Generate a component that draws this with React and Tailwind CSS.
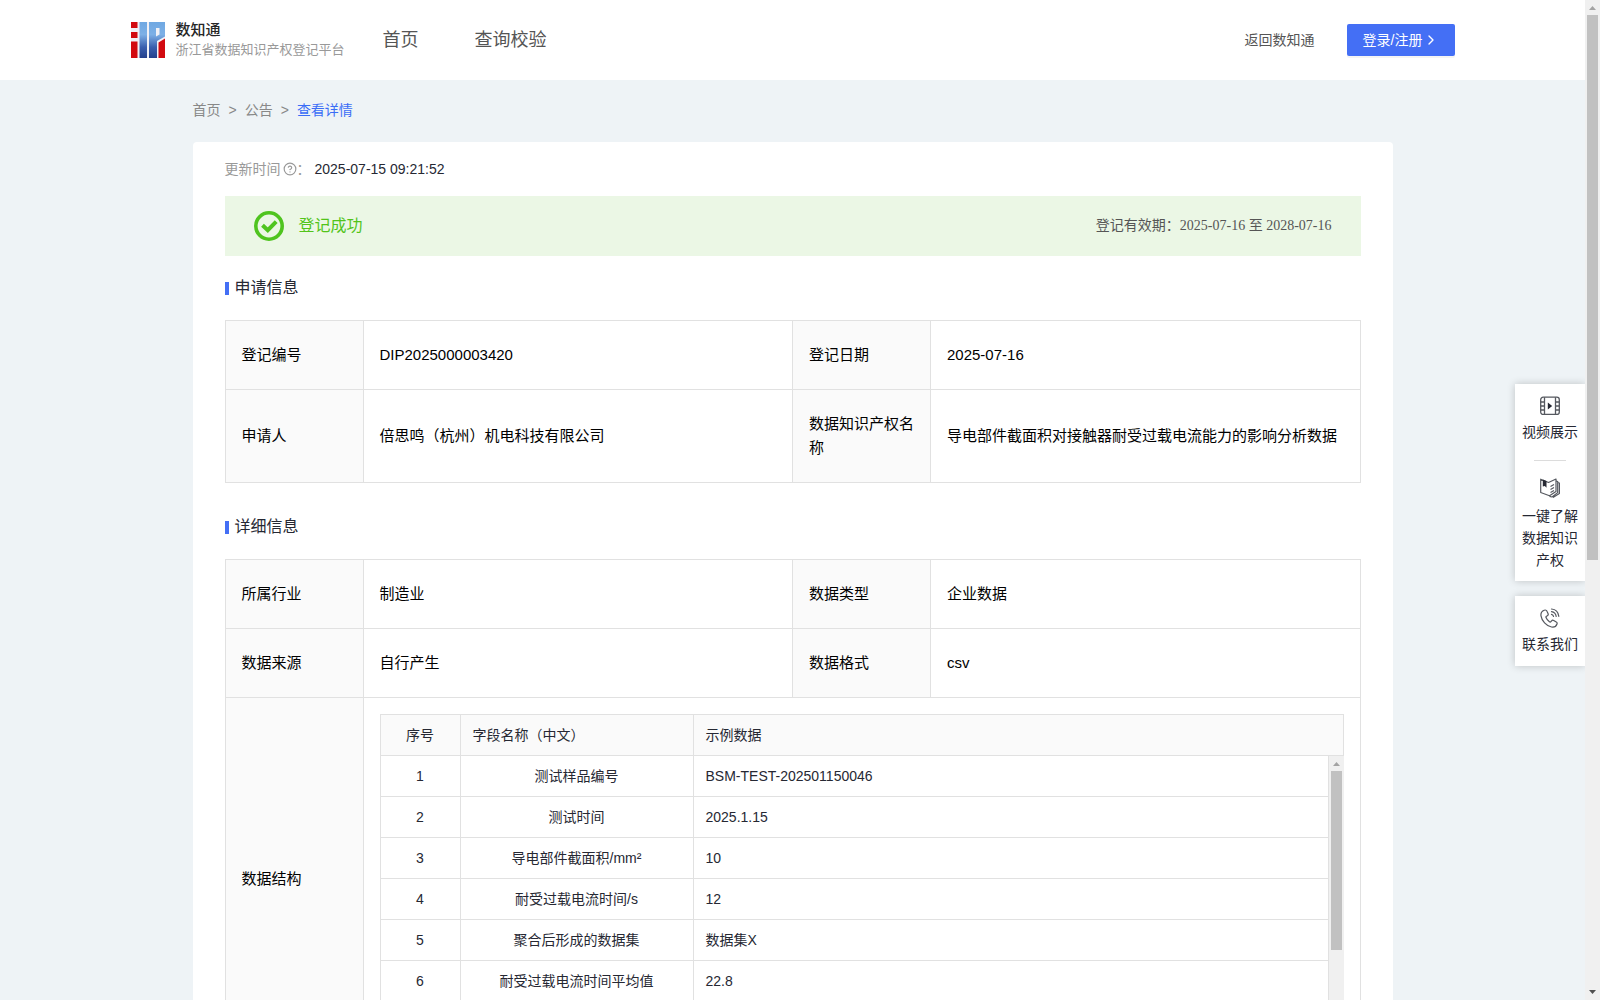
import React from 'react';
import { ChevronRight, CircleHelp } from 'lucide-react';

const applyRows = [
  ['登记编号', 'DIP2025000003420', '登记日期', '2025-07-16'],
  ['申请人', '倍思鸣（杭州）机电科技有限公司', '数据知识产权名称', '导电部件截面积对接触器耐受过载电流能力的影响分析数据'],
];

const detailRows = [
  ['所属行业', '制造业', '数据类型', '企业数据'],
  ['数据来源', '自行产生', '数据格式', 'csv'],
];

const fields = [
  { name: '测试样品编号', sample: 'BSM-TEST-202501150046' },
  { name: '测试时间', sample: '2025.1.15' },
  { name: '导电部件截面积/mm²', sample: '10' },
  { name: '耐受过载电流时间/s', sample: '12' },
  { name: '聚合后形成的数据集', sample: '数据集X' },
  { name: '耐受过载电流时间平均值', sample: '22.8' },
];

const Logo = () => (
  <svg width="34" height="36" viewBox="0 0 34 36" aria-hidden="true">
    <defs>
      <linearGradient id="logoBlue" x1="0" y1="0" x2="0" y2="36" gradientUnits="userSpaceOnUse">
        <stop offset="0" stopColor="#6fa8e2" />
        <stop offset="0.35" stopColor="#7db0e6" />
        <stop offset="0.7" stopColor="#3a5fae" />
        <stop offset="1" stopColor="#24408c" />
      </linearGradient>
    </defs>
    <path d="M0 0h34v36H0z" fill="#f1f1f6" />
    <path d="M0 0h6.500v6H0zM0 10h6.500v6H0zM0 19.500h6.500V36H0z" fill="#d20a10" />
    <path d="M8.500 0h7.500v36H8.500z" fill="url(#logoBlue)" />
    <path d="M18 0h16v14.500l-8 4.500v17h-8zM25 6v8.500l3.500-2V6z" fill="url(#logoBlue)" fillRule="evenodd" />
    <path d="M27.500 20.500L34 16.500V36h-6.500z" fill="#d20a10" />
  </svg>
);

const VideoIcon = () => (
  <svg width="20" height="20" viewBox="0 0 20 20" fill="none" stroke="#55585f" strokeWidth="1.3" aria-hidden="true">
    <rect x="0.700" y="1.200" width="18.600" height="17.200" rx="2.500" />
    <path d="M4.500 1.200v17.200M15.500 1.200v17.200M0.700 6h3.800M0.700 10h3.800M0.700 14h3.800M15.500 6h3.800M15.500 10h3.800M15.500 14h3.800" />
    <path d="M7.800 6.600l4.400 3.400-4.400 3.400z" fill="#262833" stroke="none" />
  </svg>
);

const BookIcon = () => (
  <svg width="20" height="20" viewBox="0 0 20 20" fill="none" stroke="#55585f" strokeWidth="1.2" strokeLinejoin="round" aria-hidden="true">
    <path d="M0.700 1.200L8.500 4.500 16 1v12.500l-6.500 4.200L0.700 14.500z" />
    <path d="M16 3l1.700.6v11L12 19l-2.500-.6M17.700 4.500l1.700.5v10.500L13 19.400" />
    <path d="M10.500 8.500l3.500-2M10.500 11.500l3.500-2M10.500 14.500l3.500-2" />
    <path d="M2.800 1.500l3.700 1.600v6.600L4.800 8 2.800 8.400z" fill="#262833" stroke="none" />
  </svg>
);

const PhoneIcon = () => (
  <svg width="20" height="20" viewBox="0 0 20 20" fill="none" stroke="#55585f" strokeWidth="1.2" strokeLinejoin="round" strokeLinecap="round" aria-hidden="true">
    <path d="M4.200 2.200C2 3 .6 5 1 7.800c.8 5 5.200 10.300 10.500 11.200 2.500.4 4.800-.8 5.500-3 .3-.8 0-1.500-.7-1.900l-2.600-1.600c-.8-.5-1.600-.3-2.100.3l-.7.9c-.4.5-1 .5-1.500.1-1.600-1.100-2.700-2.500-3.400-4.200-.2-.6 0-1.100.5-1.400l.9-.5c.7-.4 1-1.200.7-2L7 3.300c-.5-1.200-1.600-1.500-2.800-1.100z" />
    <path d="M11.500 3.600c2.600.4 4.300 2.200 4.700 4.700M11.500 1c4.200.3 6.800 3.200 7.300 7.300M11.500 6.300c1.200.300 1.800.9 2 2" />
  </svg>
);

const SectionTitle = ({ children }) => (
  <h2 className="flex items-center gap-[6px] text-base leading-6 text-[#262833]">
    <span className="mt-px h-[13px] w-1 bg-[#446ff5]" />
    {children}
  </h2>
);

const InfoTable = ({ rows, children }) => (
  <table className="w-full table-fixed border-separate border-spacing-0 border-l border-t border-[#e1e1e1] text-left text-[15px] leading-6 text-black">
    <colgroup>
      <col className="w-[138px]" />
      <col />
      <col className="w-[138px]" />
      <col />
    </colgroup>
    <tbody>
      {rows.map((row) => (
        <tr key={row[0]}>
          {row.map((cell, i) =>
            i % 2 === 0 ? (
              <th key={i} scope="row" className="border-b border-r border-[#e1e1e1] bg-[#fafafa] px-4 py-[22px] font-normal">
                {cell}
              </th>
            ) : (
              <td key={i} className="border-b border-r border-[#e1e1e1] px-4 py-[22px]">
                {cell}
              </td>
            )
          )}
        </tr>
      ))}
      {children}
    </tbody>
  </table>
);

const FieldTable = () => (
  <div className="text-sm leading-5 text-[#262833]">
    <table className="w-full table-fixed border-separate border-spacing-0 border-l border-t border-[#e1e1e1] bg-[#fafafa]">
      <colgroup>
        <col className="w-20" />
        <col className="w-[233px]" />
        <col />
      </colgroup>
      <thead>
        <tr>
          <th className="border-b border-r border-[#e1e1e1] px-3 py-[10px] text-center font-normal">序号</th>
          <th className="border-b border-r border-[#e1e1e1] px-3 py-[10px] font-normal">字段名称（中文）</th>
          <th className="border-b border-r border-[#e1e1e1] px-3 py-[10px] font-normal">示例数据</th>
        </tr>
      </thead>
    </table>
    <div className="flex h-[287px] overflow-hidden">
      <div className="flex-1">
        <table className="w-full table-fixed border-separate border-spacing-0 border-l border-[#e1e1e1]">
          <colgroup>
            <col className="w-20" />
            <col className="w-[233px]" />
            <col />
          </colgroup>
          <tbody>
            {fields.map((field, index) => (
              <tr key={field.name}>
                <td className="border-b border-r border-[#e1e1e1] px-3 py-[10px] text-center">{index + 1}</td>
                <td className="border-b border-r border-[#e1e1e1] px-3 py-[10px] text-center">{field.name}</td>
                <td className="border-b border-r border-[#e1e1e1] px-3 py-[10px]">{field.sample}</td>
              </tr>
            ))}
          </tbody>
        </table>
      </div>
      <div className="flex w-[15px] flex-col items-center bg-[#f0f0f0]">
        <svg width="15" height="15" viewBox="0 0 15 15" aria-hidden="true">
          <path d="M4 10l3.500-4 3.500 4z" fill="#a3a3a3" />
        </svg>
        <div className="h-[179px] w-[11px] bg-[#c1c1c1]" />
      </div>
    </div>
  </div>
);

const Header = () => (
  <header className="bg-white">
    <div className="mx-auto flex h-20 max-w-[1324px] items-center">
      <a href="#" className="flex items-center gap-[11px]">
        <Logo />
        <span className="flex flex-col">
          <span className="text-[15px] font-medium leading-5 text-[#262626]">数知通</span>
          <span className="text-[13px] leading-5 text-[#999]">浙江省数据知识产权登记平台</span>
        </span>
      </a>
      <nav className="ml-[38px] flex gap-14 text-lg text-[#555]">
        <a href="#">首页</a>
        <a href="#">查询校验</a>
      </nav>
      <a href="#" className="ml-auto text-sm text-[#555]">返回数知通</a>
      <button type="button" className="ml-8 flex h-8 items-center rounded-[2px] bg-[#446ff5] px-4 text-sm text-white shadow-[0_2px_0_rgba(0,0,0,0.045)]">
        登录/注册
        <ChevronRight className="h-4 w-4" />
      </button>
    </div>
  </header>
);

const SideBar = () => (
  <aside className="absolute right-0 top-96 flex w-[70px] flex-col gap-[15px] text-center text-sm leading-[22px] text-[#262833]">
    <div className="flex flex-col items-center bg-white px-[7px] pb-[10px] pt-3 shadow-[0_0_8px_rgba(0,0,0,0.2)]">
      <a href="#" className="flex flex-col items-center gap-[5px]">
        <VideoIcon />
        视频展示
      </a>
      <span className="my-[17px] h-px w-8 bg-[#dcdcdc]" />
      <a href="#" className="flex flex-col items-center gap-[7px]">
        <BookIcon />
        一键了解数据知识产权
      </a>
    </div>
    <div className="bg-white px-[7px] pb-[11px] pt-3 shadow-[0_0_8px_rgba(0,0,0,0.2)]">
      <a href="#" className="flex flex-col items-center gap-[5px]">
        <PhoneIcon />
        联系我们
      </a>
    </div>
  </aside>
);

const PageScrollbar = () => (
  <div className="flex w-[15px] flex-col items-center justify-between bg-[#f0f0f0]">
    <div className="flex flex-col items-center">
      <svg width="15" height="15" viewBox="0 0 15 15" aria-hidden="true">
        <path d="M4 10l3.500-4 3.500 4z" fill="#a3a3a3" />
      </svg>
      <div className="h-[545px] w-[11px] bg-[#c1c1c1]" />
    </div>
    <svg width="15" height="15" viewBox="0 0 15 15" aria-hidden="true">
      <path d="M4 5h7l-3.500 4z" fill="#505050" />
    </svg>
  </div>
);

const App = () => {
  return (
    <div className="flex h-screen overflow-hidden font-['Liberation_Sans','Noto_Sans_CJK_SC',sans-serif]">
      <div className="relative flex-1 overflow-hidden bg-[#eef3f6]">
        <Header />
        <main className="mx-auto max-w-[1200px]">
          {/* Breadcrumb */}
          <nav className="flex gap-2 pb-[22px] pt-5 text-sm text-[#888]">
            <a href="#">首页</a>
            <span>&gt;</span>
            <a href="#">公告</a>
            <span>&gt;</span>
            <span className="text-[#3b6df6]">查看详情</span>
          </nav>

          <div className="rounded bg-white px-8 pb-8 pt-4">
            <div className="flex items-center text-sm leading-[22px] text-[#262833]">
              <span className="text-[#999]">更新时间</span>
              <CircleHelp className="ml-[2px] h-[14px] w-[14px] text-[#999]" />
              <span className="text-[#999]">：</span>
              <span className="ml-1">2025-07-15 09:21:52</span>
            </div>

            {/* Registration status */}
            <div className="mt-4 flex h-[60px] items-center justify-between bg-[#ebf7e5] px-[29px]">
              <div className="flex items-center gap-[15px] text-base text-[#52c41a]">
                <svg width="30" height="30" viewBox="0 0 30 30" fill="none" stroke="#4fc41f" aria-hidden="true">
                  <circle cx="15" cy="15" r="13.200" strokeWidth="3.600" />
                  <path d="M8.500 14.200l5.300 5 8.400-8.600" strokeWidth="4" />
                </svg>
                登记成功
              </div>
              <p className="text-sm text-[#555] font-['Liberation_Serif','Noto_Sans_CJK_SC',serif]">
                登记有效期：2025-07-16 至 2028-07-16
              </p>
            </div>

            <div className="mb-5 mt-5">
              <SectionTitle>申请信息</SectionTitle>
            </div>
            <InfoTable rows={applyRows} />

            <div className="mb-5 mt-8">
              <SectionTitle>详细信息</SectionTitle>
            </div>
            <InfoTable rows={detailRows}>
              <tr>
                <th scope="row" className="border-b border-r border-[#e1e1e1] bg-[#fafafa] px-4 font-normal">
                  数据结构
                </th>
                <td colSpan={3} className="border-b border-r border-[#e1e1e1] p-4">
                  <FieldTable />
                </td>
              </tr>
            </InfoTable>
          </div>
        </main>
        <SideBar />
      </div>
      <PageScrollbar />
    </div>
  );
};

export default App;
